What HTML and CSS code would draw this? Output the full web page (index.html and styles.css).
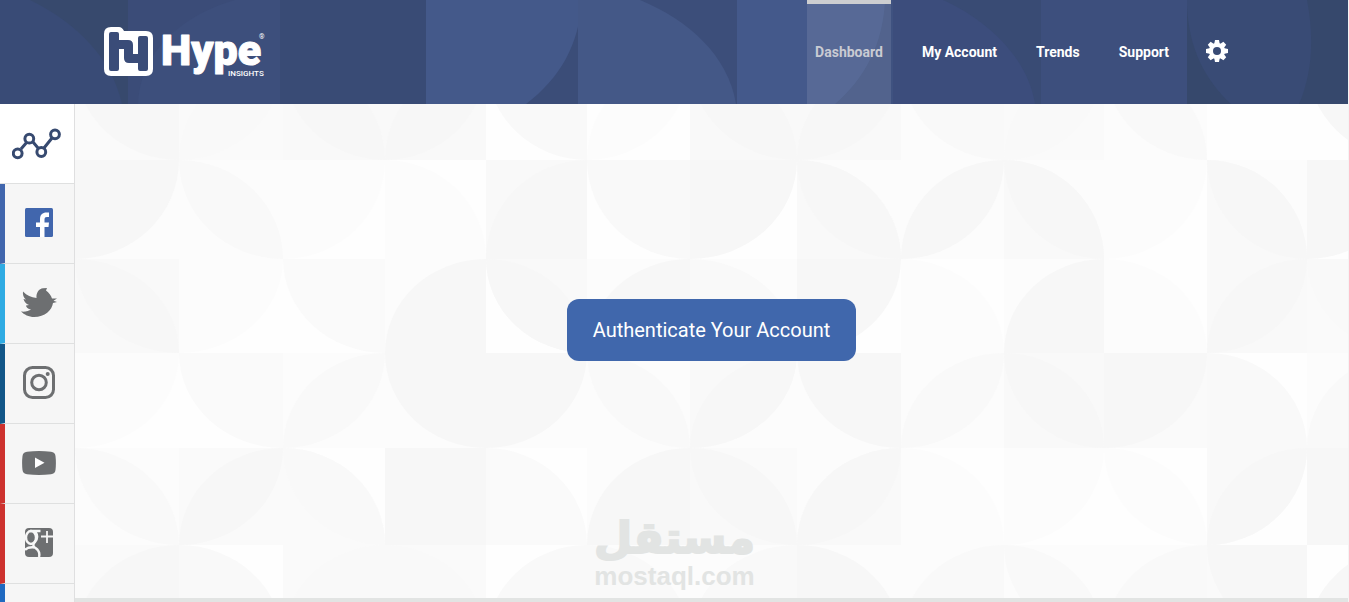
FILE: index.html
```html
<!DOCTYPE html>
<html lang="en">
<head>
  <meta charset="UTF-8">
  <meta name="viewport" content="width=device-width, initial-scale=1.0">
  <title>Hype Insights</title>
  <link rel="stylesheet" href="styles.css">
</head>
<body>
  <header class="header">
    <svg class="header-bg" viewBox="0 0 1348 104" preserveAspectRatio="none" aria-hidden="true">
      <path fill="#37496d" d="M0 0h128v104H0z"/>
      <path fill="#394b76" d="M0 0h30c50 25 82 60 92 104H0z"/>
      <path fill="#3b4c78" d="M128 0h152v104H128z"/>
      <path fill="#3d4f7c" d="M280 0h-45c-50 14-95 50-97 104h142z"/>
      <path fill="#394b75" d="M280 0h146v104H280z"/>
      <path fill="#3b4d78" d="M426 0h152v104H426z"/>
      <path fill="#44598a" d="M426 0h156c-3 45-22 78-56 104H426z"/>
      <path fill="#3c4e7a" d="M578 0h159v104H578z"/>
      <path fill="#445887" d="M578 0h62c48 20 88 55 96 104H578z"/>
      <path fill="#3f5280" d="M737 0h156v104H737z"/>
      <path fill="#44598b" d="M737 0h148c-2 44-20 78-50 104h-98z"/>
      <path fill="#394b74" d="M893 0h148v104H893z"/>
      <path fill="#3c4d7c" d="M893 0h50c48 22 85 60 92 104H893z"/>
      <path fill="#3d4f7d" d="M1041 0h146v104h-146z"/>
      <path fill="#36486c" d="M1187 0h161v104h-161z"/>
      <path fill="#394b75" d="M1187 0h120c8 42 4 76-8 104h-68c-26-24-42-55-44-98z"/>
    </svg>

    <a class="logo" href="#" aria-label="Hype Insights">
      <svg viewBox="104 27 162 50" width="162" height="50">
        <path fill="#fff" d="M111 27h8q3 0 5 4h22q7 0 7 7v31q0 7-7 7h-35q-7 0-7-7V34q0-7 7-7z"/>
        <path fill="#3a4c78" d="M109 34q0-2 2-2h6q2 0 2 2v6h9q5 0 5 5v9h5V38q0-2 2-2h6q2 0 2 2v31q0 2-2 2h-6q-2 0-2-2v-6h-9q-5 0-5-5v-9h-5v20q0 2-2 2h-6q-2 0-2-2z"/>
        <text class="logo-name" x="161" y="65">Hype</text>
        <text class="logo-sub" x="228" y="76">INSIGHTS</text>
        <text class="logo-reg" x="259" y="39">®</text>
      </svg>
    </a>

    <nav class="nav">
      <a class="nav-link active" href="#">Dashboard</a>
      <a class="nav-link" href="#">My Account</a>
      <a class="nav-link" href="#">Trends</a>
      <a class="nav-link" href="#">Support</a>
      <button class="settings" type="button" aria-label="Settings">
        <svg viewBox="-11 -11 22 22" width="22" height="22">
          <g fill="#fff">
            <path id="tooth" d="M-2.7-7.5-2-11h4l.7 3.5v15L2 11h-4l-.7-3.5z"/>
            <use href="#tooth" transform="rotate(45)"/>
            <use href="#tooth" transform="rotate(90)"/>
            <use href="#tooth" transform="rotate(135)"/>
            <circle r="8"/>
          </g>
          <circle r="4" fill="#394b75"/>
        </svg>
      </button>
    </nav>
  </header>

  <div class="page">
    <aside class="sidebar">
      <a class="side-link overview" href="#" aria-label="Overview">
        <svg viewBox="12 127 50 32" width="50" height="32" fill="none" stroke="#374a70" stroke-width="3">
          <path d="M21 148l6-7M33 141l5 6M44 147l8-10"/>
          <circle cx="17.7" cy="152.3" r="4.4"/>
          <circle cx="29.3" cy="137.7" r="4.4"/>
          <circle cx="41.3" cy="151" r="4.4"/>
          <circle cx="55" cy="133.3" r="4.4"/>
        </svg>
      </a>
      <a class="side-link facebook" href="#" aria-label="Facebook">
        <svg viewBox="0 0 28 29" width="28" height="29">
          <rect width="28" height="29" rx="1.5" fill="#4166ad"/>
          <path fill="#fff" d="M15 29V19h-4v-4.500h4V11.500C15 6.500 17.500 4.500 21.500 4.500H24V9h-2c-1.800 0-2.500.8-2.500 2.500v3H24l-.5 4.500h-4v10z"/>
        </svg>
      </a>
      <a class="side-link twitter" href="#" aria-label="Twitter">
        <svg viewBox="0 0 36 29" width="36" height="29">
          <path fill="#6d6f71" d="M0 23.500C4 24 8 23 10 21.500 7 21 5 19 5 17.500L8 17C5 16 3 13.500 2.500 11l2.500.5C2.500 10 1.500 6.500 2 3.500 6 7.500 10 9.500 15.500 10 15 5 18 .5 22 .3L26 0l-1 2.500c3 2 5 5 6 8h5l-3.500 2.200L36 14l-4 1c-1 7-8 14-19 14-5 0-10-2.500-13-5.500z"/>
        </svg>
      </a>
      <a class="side-link instagram" href="#" aria-label="Instagram">
        <svg viewBox="0 0 32 33" width="32" height="33" fill="none" stroke="#6d6f71" stroke-width="3">
          <rect x="1.500" y="1.500" width="29" height="30" rx="8"/>
          <circle cx="16" cy="16.500" r="7.300"/>
          <circle cx="24.700" cy="8" r="2" fill="#6d6f71" stroke="none"/>
        </svg>
      </a>
      <a class="side-link youtube" href="#" aria-label="YouTube">
        <svg viewBox="0 0 34 24" width="34" height="24">
          <path fill="#6d6f71" d="M5 .8Q17-.8 29 .8q4 .5 4.500 4.200.8 7 0 14-.5 3.700-4.500 4.200-12 1.600-24 0Q1 22.700.5 19q-.8-7 0-14Q1 1.300 5 .8z"/>
          <path fill="#fff" d="M13 6.500v10.500l9.500-5.200z"/>
        </svg>
      </a>
      <a class="side-link google" href="#" aria-label="Google Plus">
        <svg viewBox="0 0 28 29" width="28" height="29">
          <rect width="28" height="29" rx="4" fill="#6d6f71"/>
          <g fill="none" stroke="#f6f6f6">
            <path stroke-width="1.800" d="M22 3v12M16 8.500h12"/>
            <ellipse cx="6" cy="9.500" rx="5" ry="6.500" stroke-width="2.400"/>
            <path stroke-width="2.400" d="M5 3h10.500M10.500 4q3.500 5-.5 10-3.500 3.500.5 6 5 3.500 3.500 9M10 19.500Q3 18.500 0 22"/>
          </g>
        </svg>
      </a>
      <a class="side-link linkedin" href="#" aria-label="LinkedIn"></a>
    </aside>

    <main class="content">
      <svg class="pattern" id="pattern" viewBox="75 104 1273 494" preserveAspectRatio="xMidYMin slice" aria-hidden="true">
        <defs>
          <symbol id="Q" viewBox="0 0 10 10" preserveAspectRatio="none"><path d="M0 0h10A10 10 0 0 1 0 10z"/></symbol>
          <symbol id="W" viewBox="0 0 10 10" preserveAspectRatio="none"><path d="M10 0v10A10 10 0 0 1 0 0z"/></symbol>
          <symbol id="A" viewBox="0 0 10 10" preserveAspectRatio="none"><path d="M0 10V0a10 10 0 0 1 10 10z"/></symbol>
          <symbol id="S" viewBox="0 0 10 10" preserveAspectRatio="none"><path d="M10 10H0A10 10 0 0 1 10 0z"/></symbol>
          <symbol id="L" viewBox="0 0 10 10" preserveAspectRatio="none"><path d="M0 0a10 10 0 0 1 10 10A10 10 0 0 1 0 0z"/></symbol>
          <symbol id="R" viewBox="0 0 10 10" preserveAspectRatio="none"><path d="M10 0A10 10 0 0 1 0 10 10 10 0 0 1 10 0z"/></symbol>
        </defs>
      </svg>
      <button class="auth-button" type="button">Authenticate Your Account</button>
    </main>
  </div>

  <div class="watermark">
    <span class="watermark-ar" lang="ar" dir="rtl">مستقل</span>
    <span class="watermark-en">mostaql.com</span>
  </div>

  <script src="pattern.js"></script>
</body>
</html>
```
FILE: styles.css
```css
* {
  box-sizing: border-box;
}
body {
  margin: 0;
  height: 100vh;
  display: flex;
  flex-direction: column;
  position: relative;
  overflow: hidden;
  padding-right: 1px;
  background-color: #f4f4f4;
  font-family: Roboto, "Liberation Sans", sans-serif;
}
.header {
  position: relative;
  flex: none;
  display: flex;
  justify-content: space-between;
  height: 104px;
  padding: 0 120px 0 104px;
  background-color: #3b4d7a;
}
.header-bg {
  position: absolute;
  top: 0;
  left: 0;
  width: 100%;
  height: 100%;
}
.logo {
  position: relative;
  display: flex;
  align-items: center;
}
.logo svg {
  overflow: visible;
}
.logo text {
  fill: #fff;
}
.logo-name {
  font-size: 43px;
  font-weight: 900;
  stroke: #fff;
  stroke-width: 1px;
  stroke-linejoin: round;
}
.logo-sub {
  font-size: 8px;
  font-weight: 500;
}
.logo-reg {
  font-size: 7px;
}
.nav {
  position: relative;
  display: flex;
  gap: 23px;
}
.nav-link {
  display: flex;
  align-items: center;
  padding: 0 8px 4px;
  border-top: 4px solid transparent;
  color: #fff;
  font-size: 14px;
  font-weight: 700;
  text-decoration: none;
}
.nav-link.active {
  color: #c9cbd3;
  border-top-color: #cdced0;
  background-color: rgba(255, 255, 255, 0.1);
  background-clip: padding-box;
}
.settings {
  display: flex;
  align-items: center;
  padding: 0 0 2px 6px;
  border: none;
  background: none;
  cursor: pointer;
}
.page {
  flex: 1;
  display: flex;
  min-height: 0;
}
.sidebar {
  flex: none;
  width: 75px;
  overflow: hidden;
  background-color: #f6f6f6;
  border-right: 1px solid #dfdfe0;
}
.side-link {
  display: flex;
  align-items: center;
  justify-content: center;
  height: 80px;
  padding: 0 1px 2px 0;
  border-bottom: 1px solid #dfe0e0;
  border-left: 5px solid #1f69c0;
}
.side-link.overview {
  padding: 0;
  border-left: none;
  background-color: #fff;
}
.side-link.facebook {
  border-left-color: #4166ad;
}
.side-link.twitter {
  border-left-color: #2fabe3;
}
.side-link.instagram {
  border-left-color: #125688;
}
.side-link.youtube,
.side-link.google {
  border-left-color: #cd322e;
}
.content {
  position: relative;
  flex: 1;
  display: flex;
  justify-content: center;
  align-items: flex-start;
  padding-top: 195px;
  overflow: hidden;
  background-color: #fff;
  border-bottom: 4px solid #e2e4e3;
}
.pattern {
  position: absolute;
  top: 0;
  left: 0;
  width: 100%;
  height: 100%;
}
.auth-button {
  position: relative;
  height: 62px;
  padding: 0 26px;
  border: none;
  border-radius: 12px;
  background-color: #4067ac;
  color: #fff;
  font-family: inherit;
  font-size: 20px;
  cursor: pointer;
}
.watermark {
  position: absolute;
  bottom: 12px;
  left: 0;
  right: 0;
  display: flex;
  flex-direction: column;
  align-items: center;
  color: #e2e4e3;
  pointer-events: none;
}
.watermark-ar {
  font-family: "DejaVu Sans", sans-serif;
  font-size: 44px;
  font-weight: 700;
  line-height: 48px;
  -webkit-text-stroke: 2px #e2e4e3;
}
.watermark-en {
  font-family: "Liberation Sans", sans-serif;
  font-size: 26px;
  font-weight: 700;
  line-height: 28px;
}
```
FILE: pattern.js
```js
// grid lines of the background tiles
const xs = [75, 179, 283, 385, 486, 587, 690, 797, 901, 1004, 1104, 1207, 1307, 1410];
const ys = [61, 160, 259, 353, 448, 545, 642];
const tones = ['#fefefe', '#fcfcfc', '#fafafa', '#f9f9f9', '#f7f7f7'];

// base tone, then shape + tone pairs
const rows = [
  '2W4 2R3 3L4 3R4 0W3 0R1 3L4 3R4 1W3 2R3 1L3 0 0W4',
  '1Q4 1L3 0Q1 0A1 3S4 0W3 0Q4 1A3L4 1R4 1A3L4 0Q1 1A3L4 0Q4',
  '3L4 0Q1 0W2 1S4 0W3L4 1S4 1A3 0Q4 0A1 1S4 0A1 3R4 2W3',
  '0Q1 0W2 1R3 1W4 1Q4 1L3 1Q3R4 1W4 1R3 3L4 2Q4 0A3 1S3',
  '1L3 2R4 0A2L3 4 0A2 1S4 2A3L4 1S3R4 0A1 0Q1 0L1 0Q3R4 4',
  '2S4 0A3 2S3 2A3 0S3 1A3 1S3 1A4 1S3 1L3 1S3 2W4 0S4'
];

const svg = document.getElementById('pattern');

function draw(tag, col, row, tone, shape) {
  const el = document.createElementNS('http://www.w3.org/2000/svg', tag);
  el.setAttribute('x', xs[col]);
  el.setAttribute('y', ys[row]);
  el.setAttribute('width', xs[col + 1] - xs[col]);
  el.setAttribute('height', ys[row + 1] - ys[row]);
  el.setAttribute('fill', tones[tone]);
  if (shape) el.setAttribute('href', '#' + shape);
  svg.appendChild(el);
}

rows.forEach((line, row) => {
  line.split(' ').forEach((cell, col) => {
    draw('rect', col, row, cell[0]);
    for (let i = 1; i < cell.length; i += 2) {
      draw('use', col, row, cell[i + 1], cell[i]);
    }
  });
});
```
